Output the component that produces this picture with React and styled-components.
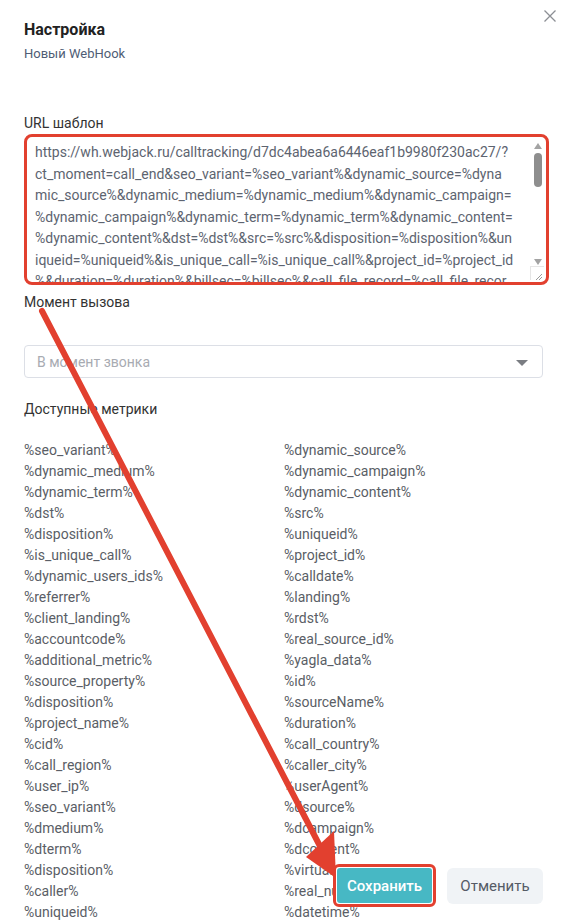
import React from "react";
import styled, { createGlobalStyle } from "styled-components";

const GlobalStyle = createGlobalStyle`
  html, body {
    margin: 0;
    padding: 0;
    background: #ffffff;
    overflow: hidden;
  }
  body {
    font-family: Roboto, "Liberation Sans", Arial, sans-serif;
  }
`;

const urlLines = [
  "https://wh.webjack.ru/calltracking/d7dc4abea6a6446eaf1b9980f230ac27/?",
  "ct_moment=call_end&seo_variant=%seo_variant%&dynamic_source=%dyna",
  "mic_source%&dynamic_medium=%dynamic_medium%&dynamic_campaign=",
  "%dynamic_campaign%&dynamic_term=%dynamic_term%&dynamic_content=",
  "%dynamic_content%&dst=%dst%&src=%src%&disposition=%disposition%&un",
  "iqueid=%uniqueid%&is_unique_call=%is_unique_call%&project_id=%project_id",
  "%&duration=%duration%&billsec=%billsec%&call_file_record=%call_file_recor",
];

const metrics = [
  ["%seo_variant%", "%dynamic_source%"],
  ["%dynamic_medium%", "%dynamic_campaign%"],
  ["%dynamic_term%", "%dynamic_content%"],
  ["%dst%", "%src%"],
  ["%disposition%", "%uniqueid%"],
  ["%is_unique_call%", "%project_id%"],
  ["%dynamic_users_ids%", "%calldate%"],
  ["%referrer%", "%landing%"],
  ["%client_landing%", "%rdst%"],
  ["%accountcode%", "%real_source_id%"],
  ["%additional_metric%", "%yagla_data%"],
  ["%source_property%", "%id%"],
  ["%disposition%", "%sourceName%"],
  ["%project_name%", "%duration%"],
  ["%cid%", "%call_country%"],
  ["%call_region%", "%caller_city%"],
  ["%user_ip%", "%userAgent%"],
  ["%seo_variant%", "%dsource%"],
  ["%dmedium%", "%dcampaign%"],
  ["%dterm%", "%dcontent%"],
  ["%disposition%", "%virtual_number%"],
  ["%caller%", "%real_number%"],
  ["%uniqueid%", "%datetime%"],
];

const Page = styled.div`
  position: relative;
  width: 563px;
  height: 920px;
  overflow: hidden;
  background: #fff;
`;

const Panel = styled.div`
  padding: 20px 20px 0 24px;
  display: flex;
  flex-direction: column;
`;

const Title = styled.div`
  font-size: 16px;
  font-weight: 700;
  line-height: 20px;
  color: #222;
`;

const Subtitle = styled.div`
  margin-top: 5px;
  font-size: 13px;
  line-height: 18px;
  color: #4f5d75;
`;

const CloseButton = styled.div`
  position: absolute;
  top: 8px;
  right: 6px;
  width: 14px;
  height: 14px;
  color: #8c8f94;
`;

const Label = styled.div`
  margin-top: ${(p) => p.$gap}px;
  font-size: 14px;
  line-height: 20px;
  color: #333;
`;

const TextArea = styled.div`
  position: relative;
  margin-top: 1px;
  width: 519px;
  height: 145px;
  border: 3px solid #e2402f;
  border-radius: 8px;
  padding: 5px 0 0 8px;
  box-sizing: content-box;
  overflow: hidden;
  font-size: 14px;
  line-height: 21.5px;
  color: #5d6470;
  box-sizing: border-box;
  height: 151px;
  width: 525px;
`;

const UrlLine = styled.div`
  white-space: nowrap;
`;

const ScrollTrack = styled.div`
  position: absolute;
  top: 2px;
  right: 3px;
  bottom: 14px;
  width: 11px;
  background: #fff;
  display: flex;
  flex-direction: column;
  align-items: center;
`;

const ScrollArrow = styled.div`
  width: 0;
  height: 0;
  border-left: 4.5px solid transparent;
  border-right: 4.5px solid transparent;
  ${(p) =>
    p.$down
      ? "border-top: 6px solid #a3a3a3; margin-top: auto; margin-bottom: 3px;"
      : "border-bottom: 6px solid #a3a3a3; margin-top: 4px;"}
`;

const ScrollThumb = styled.div`
  margin-top: 4px;
  width: 8px;
  height: 34px;
  border-radius: 4px;
  background: #8e8e8e;
`;

const Grip = styled.div`
  position: absolute;
  right: 2px;
  bottom: 2px;
  width: 13px;
  height: 13px;
  background: #fff;
  border-left: 1px solid #e6e6e6;
  border-top: 1px solid #e6e6e6;
`;

const Select = styled.div`
  margin-top: 33px;
  width: 519px;
  height: 33px;
  box-sizing: border-box;
  border: 1px solid #dcdfe6;
  border-radius: 4px;
  padding: 0 14px 0 12px;
  display: flex;
  align-items: center;
  justify-content: space-between;
  font-size: 14px;
  color: #a8abb2;
`;

const Caret = styled.div`
  width: 0;
  height: 0;
  border-left: 6px solid transparent;
  border-right: 6px solid transparent;
  border-top: 6px solid #7a7d82;
  margin-top: 2px;
`;

const MetricGrid = styled.div`
  margin-top: 21px;
  display: grid;
  grid-template-columns: 260px 260px;
  font-size: 14px;
  line-height: 21px;
  color: #5a5e66;
`;

const Footer = styled.div`
  position: absolute;
  right: 20px;
  bottom: 13px;
  display: flex;
  align-items: center;
  gap: 11px;
`;

const SaveWrap = styled.div`
  border: 3px solid #e2402f;
  border-radius: 6px;
  padding: 1px;
  background: #fff;
`;

const SaveButton = styled.div`
  width: 95px;
  height: 35px;
  border-radius: 3px;
  background: #47b8c4;
  color: #fff;
  font-size: 15px;
  font-weight: 500;
  display: flex;
  align-items: center;
  justify-content: center;
`;

const CancelButton = styled.div`
  width: 96px;
  height: 36px;
  border-radius: 6px;
  background: #f0f3f6;
  color: #555b66;
  font-size: 15px;
  display: flex;
  align-items: center;
  justify-content: center;
`;

const Annotation = styled.svg`
  position: absolute;
  left: 0;
  top: 0;
  pointer-events: none;
`;

export default function App() {
  return (
    <Page>
      <GlobalStyle />
      <CloseButton>
        <svg width="14" height="14" viewBox="0 0 14 14">
          <path d="M1.5 1.5 L12.5 12.5 M12.5 1.5 L1.5 12.5" stroke="currentColor" strokeWidth="1.3" fill="none" />
        </svg>
      </CloseButton>
      <Panel>
        <Title>Настройка</Title>
        <Subtitle>Новый WebHook</Subtitle>

        <Label $gap={50}>URL шаблон</Label>
        <TextArea>
          {urlLines.map((line, i) => (
            <UrlLine key={i}>{line}</UrlLine>
          ))}
          <ScrollTrack>
            <ScrollArrow />
            <ScrollThumb />
            <ScrollArrow $down />
          </ScrollTrack>
          <Grip>
            <svg width="13" height="13" viewBox="0 0 13 13">
              <path d="M11 5 L5 11 M11 8 L8 11" stroke="#9a9a9a" strokeWidth="1" fill="none" />
            </svg>
          </Grip>
        </TextArea>

        <Label $gap={7}>Момент вызова</Label>
        <Select>
          <span>В момент звонка</span>
          <Caret />
        </Select>

        <Label $gap={21}>Доступные метрики</Label>
        <MetricGrid>
          {metrics.map(([a, b], i) => (
            <React.Fragment key={i}>
              <div>{a}</div>
              <div>{b}</div>
            </React.Fragment>
          ))}
        </MetricGrid>
      </Panel>

      <Footer>
        <SaveWrap>
          <SaveButton>Сохранить</SaveButton>
        </SaveWrap>
        <CancelButton>Отменить</CancelButton>
      </Footer>

      <Annotation width="563" height="920" viewBox="0 0 563 920">
        <line x1="42" y1="311" x2="322" y2="850" stroke="#e2402f" strokeWidth="6" strokeLinecap="round" />
        <polygon points="336,878 306,857 334,831" fill="#e2402f" />
      </Annotation>
    </Page>
  );
}
